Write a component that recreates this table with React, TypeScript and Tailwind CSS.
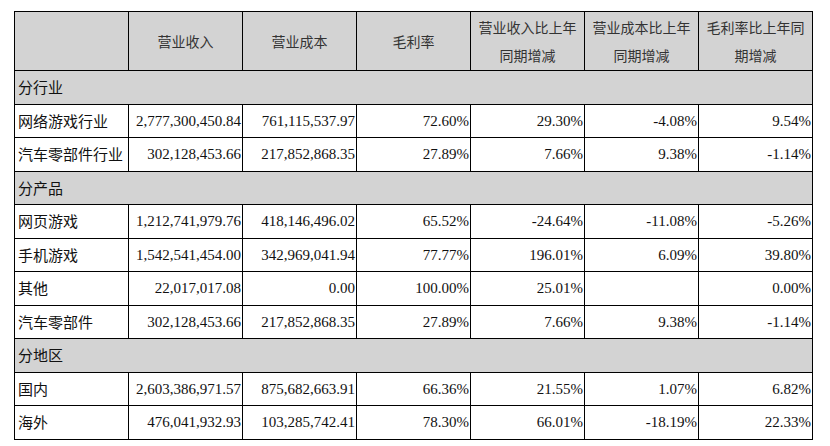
const cjk = "font-['Noto_Sans_CJK_SC',sans-serif]"

type Row =
  | { kind: "group"; label: string }
  | { kind: "data"; label: string; values: string[] }

const headers = [
  "营业收入",
  "营业成本",
  "毛利率",
  "营业收入比上年同期增减",
  "营业成本比上年同期增减",
  "毛利率比上年同期增减",
]

const rows: Row[] = [
  { kind: "group", label: "分行业" },
  { kind: "data", label: "网络游戏行业", values: ["2,777,300,450.84", "761,115,537.97", "72.60%", "29.30%", "-4.08%", "9.54%"] },
  { kind: "data", label: "汽车零部件行业", values: ["302,128,453.66", "217,852,868.35", "27.89%", "7.66%", "9.38%", "-1.14%"] },
  { kind: "group", label: "分产品" },
  { kind: "data", label: "网页游戏", values: ["1,212,741,979.76", "418,146,496.02", "65.52%", "-24.64%", "-11.08%", "-5.26%"] },
  { kind: "data", label: "手机游戏", values: ["1,542,541,454.00", "342,969,041.94", "77.77%", "196.01%", "6.09%", "39.80%"] },
  { kind: "data", label: "其他", values: ["22,017,017.08", "0.00", "100.00%", "25.01%", "", "0.00%"] },
  { kind: "data", label: "汽车零部件", values: ["302,128,453.66", "217,852,868.35", "27.89%", "7.66%", "9.38%", "-1.14%"] },
  { kind: "group", label: "分地区" },
  { kind: "data", label: "国内", values: ["2,603,386,971.57", "875,682,663.91", "66.36%", "21.55%", "1.07%", "6.82%"] },
  { kind: "data", label: "海外", values: ["476,041,932.93", "103,285,742.41", "78.30%", "66.01%", "-18.19%", "22.33%"] },
]

function HeaderText({ text }: { text: string }) {
  // the long headers wrap after seven characters like the original
  if (text.length <= 7) return <>{text}</>
  return (
    <>
      {text.slice(0, 7)}
      <br />
      {text.slice(7)}
    </>
  )
}

export default function App() {
  return (
    <div className="min-h-[446px] w-[830px] bg-white pt-[11px] pl-[14px]">
      <table className="w-[799px] table-fixed border-collapse">
        <colgroup>
          {Array.from({ length: 7 }).map((_, i) => (
            <col key={i} className="w-[114px]" />
          ))}
        </colgroup>
        <thead>
          <tr className="h-[59px] bg-[#d3d3d3]">
            <th className="border border-black" />
            {headers.map((h) => (
              <th
                key={h}
                className={`border border-black px-0 text-center align-middle text-[14px] font-normal leading-[28px] text-[#333] ${cjk}`}
              >
                <HeaderText text={h} />
              </th>
            ))}
          </tr>
        </thead>
        <tbody>
          {rows.map((row, i) =>
            row.kind === "group" ? (
              <tr key={i} className="h-[33.5px] bg-[#d3d3d3]">
                <td colSpan={7} className={`border border-black pl-[3px] text-[15px] text-[#111] ${cjk}`}>
                  {row.label}
                </td>
              </tr>
            ) : (
              <tr key={i} className="h-[33.5px] bg-white">
                <td className={`border border-black pl-[3px] text-[15px] whitespace-nowrap text-[#111] ${cjk}`}>
                  {row.label}
                </td>
                {row.values.map((v, j) => (
                  <td
                    key={j}
                    className="border border-black pr-[1px] text-right font-['Liberation_Serif',serif] text-[15px] text-[#111]"
                  >
                    {v}
                  </td>
                ))}
              </tr>
            ),
          )}
        </tbody>
      </table>
    </div>
  )
}
